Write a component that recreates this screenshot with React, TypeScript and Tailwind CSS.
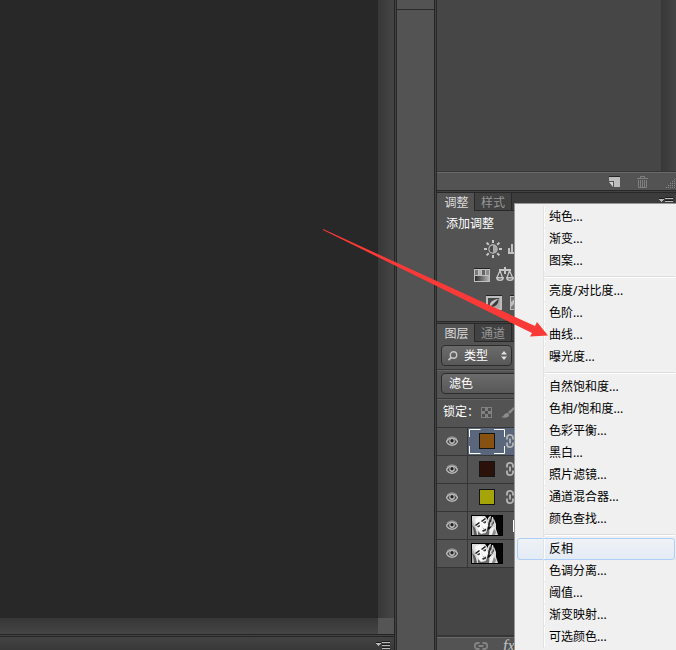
import type { ReactNode } from "react";

const menuGroups: string[][] = [
  ["纯色...", "渐变...", "图案..."],
  ["亮度/对比度...", "色阶...", "曲线...", "曝光度..."],
  ["自然饱和度...", "色相/饱和度...", "色彩平衡...", "黑白...", "照片滤镜...", "通道混合器...", "颜色查找..."],
  ["反相", "色调分离...", "阈值...", "渐变映射...", "可选颜色..."],
];

type Layer =
  | { id: number; kind: "fill"; color: string; label: string; selected?: boolean }
  | { id: number; kind: "photo"; label: string; mask?: boolean };

const layers: Layer[] = [
  { id: 1, kind: "fill", color: "bg-[#875211]", label: "橙色", selected: true },
  { id: 2, kind: "fill", color: "bg-[#2a120b]", label: "深褐" },
  { id: 3, kind: "fill", color: "bg-[#a5a50a]", label: "黄色" },
  { id: 4, kind: "photo", label: "人像副本", mask: true },
  { id: 5, kind: "photo", label: "人像" },
];

function FlyoutIcon({ className }: { className?: string }) {
  return (
    <svg width="14" height="9" viewBox="0 0 14 9" className={className} aria-hidden="true">
      <path d="M0 2h5v1H4v1H3v1H2V4H1V3H0z" fill="#b8b8b8" />
      <path d="M0 1h5v1H0zM6 0h8v1H6zM6 3h8v1H6zM6 6h8v1H6z" fill="#1c1c1c" />
      <path d="M6 1h8v1H6zM6 4h8v1H6zM6 7h8v1H6z" fill="#b8b8b8" />
    </svg>
  );
}

function NewIcon() {
  return (
    <svg width="11" height="11" viewBox="0 0 11 11" aria-hidden="true">
      <path d="M0 0h11v11H5V5H0z" fill="#bdbdbd" />
      <path d="M0 0h11v1H0z" fill="#242424" />
      <path d="M0 6h4v5z" fill="#d2d2d2" />
    </svg>
  );
}

function TrashIcon() {
  return (
    <svg width="11" height="12" viewBox="0 0 11 12" fill="none" stroke="#808080" aria-hidden="true">
      <path d="M0 2.5h11M3.5 2V.5h4V2M1.5 4v7.5h8V4M3.5 4v7M5.5 4v7M7.5 4v7" />
    </svg>
  );
}

function GripIcon() {
  return (
    <svg width="10" height="10" viewBox="0 0 10 10" aria-hidden="true">
      <path
        d="M8 0h1v1H8zM6 2h1v1H6zM8 2h1v1H8zM4 4h1v1H4zM6 4h1v1H6zM8 4h1v1H8zM2 6h1v1H2zM4 6h1v1H4zM6 6h1v1H6zM8 6h1v1H8zM0 8h1v1H0zM2 8h1v1H2zM4 8h1v1H4zM6 8h1v1H6zM8 8h1v1H8z"
        fill="#8a8a8a"
      />
    </svg>
  );
}

function BrightnessIcon() {
  return (
    <svg width="18" height="18" viewBox="0 0 18 18" aria-hidden="true">
      <path
        d="M9 0v3M9 15v3M0 9h3M15 9h3M2.600 2.600l2.200 2.200M13.200 13.200l2.200 2.200M2.600 15.400l2.200-2.200M13.200 4.800l2.200-2.200"
        stroke="#c6c6c6"
        strokeWidth="2"
      />
      <circle cx="9" cy="9" r="4" fill="#6a6a6a" stroke="#c6c6c6" strokeWidth="1.300" />
      <path d="M9 5.500a3.500 3.500 0 0 0 0 7z" fill="#4a4a4a" />
      <path d="M9 5a4 4 0 0 1 0 8z" fill="#a8a8a8" />
    </svg>
  );
}

function LevelsIcon() {
  return (
    <svg width="16" height="14" viewBox="0 0 16 14" aria-hidden="true">
      <path d="M0 12V6h2v4h1V2h2v8h1V0h2v10h2V4h2v6h1V7h2v5z" fill="#c0c0c0" />
    </svg>
  );
}

function HueIcon() {
  return (
    <svg width="16" height="14" viewBox="0 0 16 14" aria-hidden="true">
      <defs>
        <linearGradient id="hueRamp">
          <stop offset="0" stopColor="#2b2b2b" />
          <stop offset="1" stopColor="#b5b5b5" />
        </linearGradient>
      </defs>
      <path d="M0 0h16v14H0z" fill="#c0c0c0" />
      <path d="M0 0h16v1H0z" fill="#242424" />
      <path d="M1 2h3v5H1z" fill="#777" />
      <path d="M5 2h2v5H5z" fill="#b3b3b3" />
      <path d="M8 2h3v5H8z" fill="#646464" />
      <path d="M12 2h3v5h-3z" fill="#8e8e8e" />
      <path d="M1 8h14v5H1z" fill="url(#hueRamp)" />
    </svg>
  );
}

function BalanceIcon() {
  return (
    <svg width="18" height="16" viewBox="0 0 18 16" aria-hidden="true">
      <path d="M8 0h2v2h5v2h-5v3H8V4H3V2h5z" fill="#c6c6c6" />
      <path d="M4 3.500L1 10.500h5.500zM13.500 3.500L11 10.500h5.500z" fill="none" stroke="#c6c6c6" strokeWidth="1.200" />
      <path d="M0 10h8c0 3-1.500 4-4 4s-4-1-4-4zM10 10h8c0 3-1.500 4-4 4s-4-1-4-4z" fill="#c6c6c6" />
      <path d="M2 11.500h4l-1 1H3zM12 11.500h4l-1 1h-2z" fill="#4c4c4c" />
    </svg>
  );
}

function InvertIcon() {
  return (
    <svg width="16" height="15" viewBox="0 0 16 15" aria-hidden="true">
      <path d="M0 0h16v15H0z" fill="#bdbdbd" />
      <path d="M0 0h16v1H0z" fill="#242424" />
      <path d="M2 3h12L2 13z" fill="#474747" />
      <path d="M14 3v10H2z" fill="#a9a9a9" />
      <path d="M4 12C3 8 6 4.500 12.500 4z" fill="#c4c4c4" />
      <path d="M4 12L12.500 4C13 8 10 12.500 4 12z" fill="#3a3a3a" />
    </svg>
  );
}

function PosterizeIcon() {
  return (
    <svg width="16" height="15" viewBox="0 0 16 15" aria-hidden="true">
      <path d="M0 0h16v15H0z" fill="#bdbdbd" />
      <path d="M0 0h16v1H0z" fill="#242424" />
      <path d="M1 2h14v12H1z" fill="#767676" />
      <path d="M1 7l6-5h4L1 12z" fill="#bdbdbd" />
    </svg>
  );
}

function SearchIcon() {
  return (
    <svg width="10" height="10" viewBox="0 0 10 10" fill="none" stroke="#c8c8c8" aria-hidden="true">
      <circle cx="5.500" cy="4" r="3.200" strokeWidth="1.400" />
      <path d="M3.200 6.300L.5 9.200" strokeWidth="1.800" />
    </svg>
  );
}

function StepperIcon({ className }: { className?: string }) {
  return (
    <svg width="6" height="9" viewBox="0 0 6 9" className={className} aria-hidden="true">
      <path d="M0 3.500L3 0l3 3.500zM0 5.500h6L3 9z" fill="#dedede" />
    </svg>
  );
}

function CheckerIcon() {
  return (
    <svg width="11" height="11" viewBox="0 0 11 11" aria-hidden="true">
      <path d="M0 0h11v11H0z" fill="#818181" />
      <path d="M1 1h3v3H1zM7 1h3v3H7zM4 4h3v3H4zM1 7h3v3H1zM7 7h3v3H7z" fill="#4f4f4f" />
    </svg>
  );
}

function BrushIcon() {
  return (
    <svg width="16" height="12" viewBox="0 0 16 12" aria-hidden="true">
      <path d="M0 11c3 0 3-4 6-4 2 0 3 2 1 4-2 1-5 1-7 0z" fill="#8c8c8c" />
      <path d="M7 6l7-6h2l-7 8z" fill="#8c8c8c" />
    </svg>
  );
}

function EyeIcon() {
  return (
    <svg width="12" height="10" viewBox="0 0 12 10" aria-hidden="true">
      <path d="M.5 5.500C2 3 4 2 6 2s4 1 5.500 3.500C10 8.500 8 9.200 6 9.200S2 8.500.5 5.500z" fill="#4a4a4a" stroke="#b8b8b8" strokeWidth="1.400" />
      <path d="M1 3C4 .2 8 .2 11 3" fill="none" stroke="#999" />
      <circle cx="6" cy="5.300" r="2.700" fill="#c4c4c4" />
      <circle cx="6" cy="4.700" r="1.700" fill="#222" />
    </svg>
  );
}

function ChainIcon() {
  return (
    <svg width="8" height="14" viewBox="0 0 8 14" fill="none" stroke="#b4b4b4" strokeWidth="1.800" aria-hidden="true">
      <path d="M1 5.500V3.500a3 2.600 0 0 1 6 0v2M1 8.500v2a3 2.600 0 0 0 6 0v-2M4 4.500v5" />
    </svg>
  );
}

function LinkIcon() {
  return (
    <svg width="14" height="8" viewBox="0 0 14 8" fill="none" stroke="#848484" strokeWidth="1.800" aria-hidden="true">
      <path d="M5.500 1h-2a2.700 3 0 0 0 0 6h2M8.500 1h2a2.700 3 0 0 1 0 6h-2M4.500 4h5" />
    </svg>
  );
}

function Portrait() {
  return (
    <svg width="30" height="19" viewBox="0 0 30 19" className="block" aria-hidden="true">
      <path d="M0 0h30v19H0z" fill="#050505" />
      <path d="M0 0h13l3 4v6l-2 9H0z" fill="#dcdcdc" />
      <path d="M0 4l3 6 2 9H0z" fill="#b0b0b0" />
      <path d="M2 19C2 15 1 12 0 9c4 3 4 6 5 10z" fill="#5c5c5c" />
      <path d="M3 3c3-3 7-3 10 0l3 6-3 7-4 2-4-6z" fill="#fafafa" />
      <path d="M3 9l4-3 1 1-4 3zM9 5l4-3 1 1-4 3z" fill="#1c1c1c" />
      <path d="M5 10l3-1v1.500l-2 1zM11 6l3-1v2l-2 .500z" fill="#3c3c3c" />
      <path d="M9 7l2 5h2l-2 1z" fill="#aaa" />
      <path d="M10 14.500l4-2v2l-3 1.500z" fill="#303030" />
      <path d="M6 15l3 3 5-1 2-4 2 2-1 4H6z" fill="#6a6a6a" />
      <path d="M16 2l2-2h1l-1 5 2 5-3 1-1-3zM20 1h1l2 7-2 3-2-4zM22 3l2 5v5l2 6h-8l-1-5 3-4 2-1z" fill="#d8d8d8" />
      <path d="M18 2l-2 6 1 5 1-4zM21 4l-1 6 2-3z" fill="#2e2e2e" />
      <path d="M18 13l4-2-1 4-2 4h-2z" fill="#f2f2f2" />
      <path d="M22 13l2 3-1 3h-3z" fill="#8c8c8c" />
    </svg>
  );
}

function Tabs({ items, children }: { items: string[]; children?: ReactNode }) {
  return (
    <div role="tablist" className="flex h-[18px] shrink-0 bg-[#3c3c3c]">
      {items.map((item, i) => (
        <button
          key={item}
          role="tab"
          aria-selected={i === 0}
          className={
            i === 0
              ? "w-[37px] bg-[#535353] pt-0.5 pl-0.5 text-[#dcdcdc]"
              : "w-[38px] border-x border-b border-[#282828] bg-[#424242] pt-0.5 text-[#969696]"
          }
        >
          {item}
        </button>
      ))}
      <div className="flex-1 border-b border-[#282828]" />
      {children}
    </div>
  );
}

function Divider() {
  return (
    <div className="flex w-[3px] shrink-0 bg-[#424242]">
      <div className="w-px bg-[#242424]" />
      <div className="flex-1" />
      <div className="w-px bg-[#282828]" />
    </div>
  );
}

function Canvas() {
  return (
    <main className="flex min-w-0 flex-1 flex-col">
      <div className="flex flex-1">
        <div className="flex-1 bg-[#282828]" />
        <div className="w-4 bg-linear-to-r from-[#383838] to-[#454545]" />
      </div>
      <div className="flex h-4">
        <div className="flex-1 bg-linear-to-b from-[#373737] to-[#454545]" />
        <div className="w-4 bg-[#555555]" />
      </div>
      <div className="h-[3px] border-y border-[#242424] bg-[#424242]" />
      <div className="flex h-[13px] items-center justify-end bg-linear-to-b from-[#434343] to-[#393939] pr-1">
        <button aria-label="面板菜单" className="pt-1">
          <FlyoutIcon />
        </button>
      </div>
    </main>
  );
}

function LayerRow({ layer }: { layer: Layer }) {
  const selected = layer.kind === "fill" && layer.selected;
  return (
    <li className="flex h-7 border-b border-[#363636]">
      <button
        aria-label={`显示 ${layer.label}`}
        className="flex w-[31px] items-center justify-center border-r border-[#363636] pb-px"
      >
        <EyeIcon />
      </button>
      <div className={`flex flex-1 items-center ${selected ? "bg-[#59667b]" : ""}`}>
        {layer.kind === "fill" ? (
          <>
            <div className="relative ml-px flex h-[25px] w-9 items-center justify-center pb-px">
              {selected && (
                <svg className="absolute inset-0 h-full w-full" viewBox="0 0 36 25" fill="none" stroke="#fff" aria-hidden="true">
                  <path d="M.5 8V.5h11M25 .5h10.500V8M35.500 17v7.500H25M11.500 24.500H.5V17" />
                </svg>
              )}
              <div className={`h-4 w-4 border border-[#141414] ${layer.color}`} />
            </div>
            <div className="pb-px pl-px">
              <ChainIcon />
            </div>
          </>
        ) : (
          <>
            <div className="ml-[3px] border border-black">
              <Portrait />
            </div>
            {layer.mask && <div className="ml-[10px] h-3 w-6 border border-white bg-black" />}
          </>
        )}
      </div>
    </li>
  );
}

function AdjustmentMenu() {
  return (
    <div
      role="menu"
      className="absolute top-[203px] right-0 bottom-0 left-[77px] overflow-hidden border-t border-l border-[#989898] bg-[#f0f0f0] pt-0.5 pr-px pl-0.5 text-black"
    >
      {menuGroups.map((group, g) => (
        <div key={g}>
          {g > 0 && (
            <div className="flex h-2">
              <div className="w-[27px] border-r border-[#e2e2e2]" />
              <div className="mt-1 ml-px h-0.5 flex-1 border-b border-white bg-[#dedede]" />
            </div>
          )}
          {group.map((item) => {
            const active = item === "反相";
            return (
              <button
                key={item}
                role="menuitem"
                className={`flex h-[22px] w-full rounded-[3px] border text-left leading-5 ${
                  active ? "border-[#aecff7] bg-linear-to-b from-[#eff2f6] to-[#e4ebf5]" : "border-transparent"
                }`}
              >
                <span className="-my-px h-[22px] w-[26px] shrink-0 border-r border-[#e2e2e2]" />
                <span className="border-l border-white pl-1">{item}</span>
              </button>
            );
          })}
        </div>
      ))}
    </div>
  );
}

function SidePanels() {
  return (
    <aside className="relative flex w-[239px] shrink-0 flex-col overflow-hidden bg-[#535353]">
      <div className="flex h-[172px] shrink-0 border-b border-[#363636] bg-[#464646]">
        <div className="flex-1" />
        <div className="w-[15px] bg-linear-to-r from-[#383838] to-[#454545]" />
      </div>
      <div className="flex h-[18px] shrink-0 items-center justify-end border-t border-[#6a6a6a]">
        <button aria-label="新建">
          <NewIcon />
        </button>
        <button aria-label="删除" className="ml-[17px]">
          <TrashIcon />
        </button>
        <div className="mt-1 ml-[18px]">
          <GripIcon />
        </div>
      </div>

      <div className="h-[3px] shrink-0 border-y border-[#282828] bg-[#424242]" />
      <Tabs items={["调整", "样式"]}>
        <button aria-label="面板菜单" className="w-[17px] border-b border-[#282828]">
          <FlyoutIcon />
        </button>
      </Tabs>
      <section className="h-[110px] shrink-0 text-white">
        <h2 className="pt-[3px] pl-[9px] leading-5">添加调整</h2>
        <div className="mt-1.5 flex h-[18px] items-center gap-1.5 pl-[47px]">
          <BrightnessIcon />
          <LevelsIcon />
        </div>
        <div className="mt-2 flex h-[18px] items-center gap-1.5 pl-[37px]">
          <HueIcon />
          <BalanceIcon />
        </div>
        <div className="mt-[9px] flex h-[18px] items-center gap-2 pl-[49px]">
          <InvertIcon />
          <PosterizeIcon />
        </div>
      </section>

      <div className="h-[3px] shrink-0 border-y border-[#282828] bg-[#424242]" />
      <Tabs items={["图层", "通道"]} />
      <div className="flex h-7 shrink-0 items-center border-b border-[#383838] pl-1">
        <label className="relative flex h-[21px] w-[71px] items-center rounded-sm border border-[#2c2c2c] bg-linear-to-b from-[#6b6b6b] to-[#585858] pl-1.5">
          <SearchIcon />
          <select aria-label="过滤" className="ml-1.5 flex-1 appearance-none bg-transparent text-white outline-none">
            <option>类型</option>
          </select>
          <StepperIcon className="pointer-events-none absolute right-1" />
        </label>
      </div>
      <div className="flex h-[29px] shrink-0 items-center border-t border-b border-t-[#666666] border-b-[#383838] pb-0.5 pl-1">
        <select
          aria-label="混合模式"
          className="h-[21px] w-[140px] appearance-none rounded-sm border border-[#2c2c2c] bg-linear-to-b from-[#6b6b6b] to-[#585858] pl-[7px] text-white"
        >
          <option>滤色</option>
        </select>
      </div>
      <div className="flex h-[29px] shrink-0 items-center border-t border-b border-t-[#606060] border-b-[#363636] pb-1 pl-1.5">
        <span className="w-[38px] whitespace-nowrap text-white">锁定：</span>
        <button aria-label="锁定透明像素" className="pt-0.5">
          <CheckerIcon />
        </button>
        <button aria-label="锁定图像像素" className="ml-[9px]">
          <BrushIcon />
        </button>
      </div>
      <ul className="shrink-0">
        {layers.map((layer) => (
          <LayerRow key={layer.id} layer={layer} />
        ))}
      </ul>
      <div className="flex-1 bg-[#464646]" />
      <div className="h-0.5 bg-[#363636]" />
      <div className="flex h-[13px] shrink-0 items-start border-t border-[#6a6a6a] pl-[37px]">
        <button aria-label="链接图层" className="pt-1">
          <LinkIcon />
        </button>
        <button className="ml-[15px] font-['Liberation_Serif',serif] text-base leading-4 text-[#c4c4c4] italic">fx</button>
      </div>

      <AdjustmentMenu />
    </aside>
  );
}

export default function App() {
  return (
    <div className="relative flex h-screen overflow-hidden bg-[#535353] font-['Noto_Sans','Noto_Sans_CJK_SC',sans-serif] text-xs">
      <Canvas />
      <Divider />
      <div className="w-[37px] shrink-0">
        <div className="h-[10px] border-b border-[#2a2a2a]" />
      </div>
      <Divider />
      <SidePanels />

      {/* Pointer to the curves command */}
      <svg width="226" height="109" viewBox="0 0 226 109" className="pointer-events-none absolute top-[229px] right-[127px]" aria-hidden="true">
        <path d="M0 0L212 97 214 93 225 106.500 207 107.500 209 104 0 1z" fill="#fb3a37" />
      </svg>
    </div>
  );
}
